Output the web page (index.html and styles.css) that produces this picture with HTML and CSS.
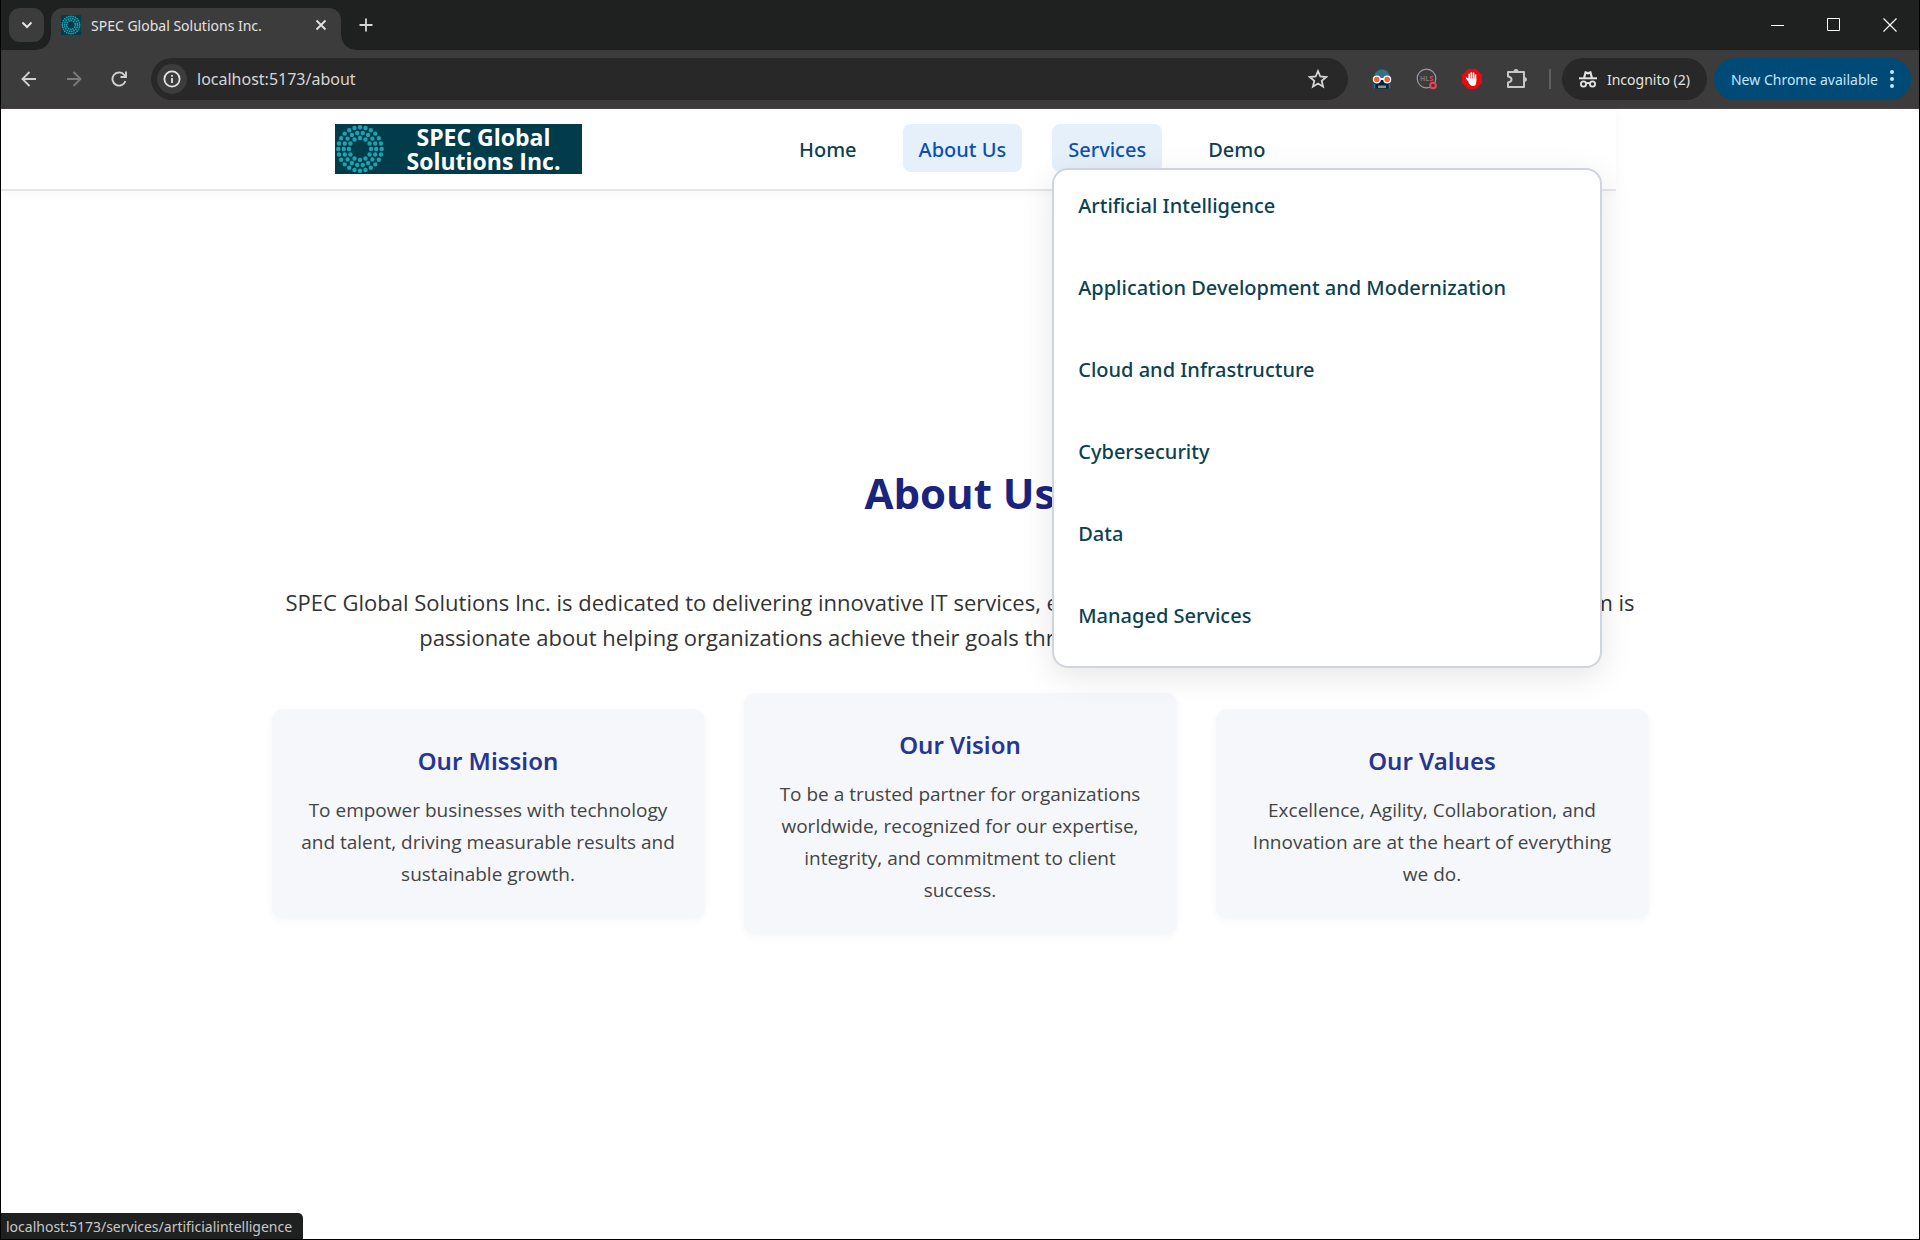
FILE: index.html
```html
<!DOCTYPE html>
<html lang="en">
<head>
<meta charset="utf-8">
<title>SPEC Global Solutions Inc.</title>
<link rel="stylesheet" href="styles.css">
</head>
<body>
<svg class="defs" aria-hidden="true">
  <symbol id="rings" viewBox="0 0 50 50">
    <rect width="50" height="50" fill="#023c4b"/>
    <g fill="none" stroke="#1ba3b1" stroke-width="4.400" stroke-linecap="round" stroke-dasharray="0 1">
      <circle cx="25" cy="25" r="21.7" pathLength="24"/>
      <circle cx="25" cy="25" r="16.2" pathLength="18"/>
      <circle cx="25" cy="25" r="11" pathLength="12"/>
    </g>
  </symbol>
</svg>
<div class="window">
  <div class="tabstrip">
    <button class="tab-search" aria-label="Search tabs"><svg width="12" height="8" viewBox="0 0 12 8"><path d="M1.5 1.5 6 6l4.500-4.500" fill="none" stroke="#e3e3e3" stroke-width="2"/></svg></button>
    <div class="tab">
      <svg class="favicon" width="20" height="20"><use href="#rings"/></svg>
      <span class="tab-title">SPEC Global Solutions Inc.</span>
      <button class="icon-btn tab-close" aria-label="Close tab"><svg width="12" height="12" viewBox="0 0 12 12"><path d="m1.500 1.500 9 9m0-9-9 9" stroke="#e3e3e3" stroke-width="1.800"/></svg></button>
    </div>
    <button class="icon-btn new-tab" aria-label="New tab"><svg width="14" height="14" viewBox="0 0 14 14"><path d="M7 .5v13M.5 7h13" stroke="#d6d6d6" stroke-width="1.800"/></svg></button>
    <div class="window-controls">
      <button class="icon-btn" aria-label="Minimize"><svg width="14" height="14" viewBox="0 0 14 14"><path d="M0 7.500h13" stroke="#fff"/></svg></button>
      <button class="icon-btn" aria-label="Maximize"><svg width="14" height="14" viewBox="0 0 14 14"><path d="M.5.5h12v12H.5z" fill="none" stroke="#fff"/></svg></button>
      <button class="icon-btn" aria-label="Close"><svg width="14" height="14" viewBox="0 0 14 14"><path d="m.5.5 13 13m0-13-13 13" stroke="#fff" stroke-width="1.200"/></svg></button>
    </div>
  </div>

  <div class="toolbar">
    <div class="history">
      <button class="icon-btn" aria-label="Back"><svg width="16" height="16" viewBox="0 0 16 16"><path d="M8.500 1 1.500 8l7 7M1.500 8H15" fill="none" stroke="#d0d0d0" stroke-width="1.800"/></svg></button>
      <button class="icon-btn" aria-label="Forward"><svg width="16" height="16" viewBox="0 0 16 16"><path d="m7.500 1 7 7-7 7M14.500 8H1" fill="none" stroke="#7c7c7c" stroke-width="1.800"/></svg></button>
      <button class="icon-btn" aria-label="Reload"><svg width="16" height="16" viewBox="0 0 16 16"><path d="M14.400 10A6.600 6.600 0 1 1 13 3.600L14.500 5.300M15 .5V6H9.500" fill="none" stroke="#d0d0d0" stroke-width="1.900"/></svg></button>
    </div>
    <div class="omnibox">
      <button class="site-info" aria-label="Site information"><svg width="18" height="18" viewBox="0 0 18 18"><circle cx="9" cy="9" r="7.600" fill="none" stroke="#e3e3e3" stroke-width="1.800"/><path d="M9 8v5M9 5v1.800" stroke="#e3e3e3" stroke-width="1.800"/></svg></button>
      <input class="url" type="text" aria-label="Address" value="localhost:5173/about">
      <button class="icon-btn" aria-label="Bookmark"><svg width="20" height="20" viewBox="0 0 20 20"><path d="m10 2 2.300 5.500 5.900.5-4.500 3.900 1.400 5.800L10 14.600l-5.100 3.100 1.400-5.800L1.800 8l5.900-.5z" fill="none" stroke="#d5d5d5" stroke-width="1.800"/></svg></button>
    </div>
    <div class="extensions">
      <button class="icon-btn" aria-label="Robot extension"><svg width="20" height="20" viewBox="0 0 20 20"><path d="M2.500 10C1.500 3 6 .5 10 .5s8.500 2.500 7.500 9.500z" fill="#2f7389"/><path d="M2.500 11h15v8.500h-15z" fill="#06202c"/><path d="M2.500 15v4.500M17.500 15v4.500" stroke="#2f7389" stroke-width="1.600"/><path d="M7 16.500v2.500M9 16.500v2.500M11 16.500v2.500M13 16.500v2.500" stroke="#c8eaf0" stroke-width="1.200"/><path d="M8 10h4" stroke="#fff" stroke-width="2"/><g fill="#f2603b" stroke="#fff" stroke-width="1.300"><circle cx="4.800" cy="10.500" r="3.400"/><circle cx="15.200" cy="10.500" r="3.400"/></g></svg></button>
      <button class="icon-btn" aria-label="HLS extension"><svg width="22" height="22" viewBox="0 0 22 22"><circle cx="10.500" cy="10.500" r="9.300" fill="none" stroke="#9c9c9c" stroke-width="1.200"/><text x="4" y="13" class="hls">HL<tspan class="hls-s">S</tspan></text><circle cx="17" cy="17.500" r="2.800" fill="#3c3c3c" stroke="#e8455c" stroke-width="2"/></svg></button>
      <button class="icon-btn" aria-label="Ad blocker"><svg width="22" height="22" viewBox="0 0 22 22"><path d="M7 1h8l6 6v8l-6 6H7l-6-6V7z" fill="#e40d0d"/><path d="m7.500 12.500-1.800-2.300M8.200 12V6.200M10.300 11V4.700M12.500 11V5M14.500 12V7" stroke="#fff" stroke-width="1.600" stroke-linecap="round"/><path d="M7.400 10.500h7.900v3q0 4.500-3.200 4.500t-4.700-4z" fill="#fff"/></svg></button>
      <button class="icon-btn" aria-label="Extensions"><svg width="22" height="22" viewBox="0 0 22 22"><path d="M2 4h16v15H2v-4.500q3.500-.7 3.500-3T2 8.500z" fill="none" stroke="#c7c7c7" stroke-width="2" stroke-linejoin="round"/><path d="M7.500 3.500a2.500 2.500 0 0 1 5 0zM18.500 9a2.500 2.500 0 0 1 0 5z" fill="#c7c7c7"/></svg></button>
    </div>
    <span class="separator"></span>
    <button class="chip"><svg width="18" height="18" viewBox="0 0 18 18"><path d="M0 8.300h18" stroke="#e3e3e3" stroke-width="2"/><path d="M4 8 5.800 1l3.200 1 3.200-1L14 8h-2.200l-1-4L9 4.600 7.200 4l-1 4z" fill="#e3e3e3"/><g fill="none" stroke="#e3e3e3" stroke-width="1.800"><circle cx="4.500" cy="14" r="2.600"/><circle cx="13.500" cy="14" r="2.600"/><path d="M7 13.500q2-1 4 0"/></g></svg><span>Incognito (2)</span></button>
    <button class="chip chip-update"><span>New Chrome available</span><svg width="4" height="18" viewBox="0 0 4 18"><g fill="#c2e7ff"><circle cx="2" cy="2" r="2"/><circle cx="2" cy="9" r="2"/><circle cx="2" cy="16" r="2"/></g></svg></button>
  </div>

  <div class="page">
    <header class="site-header">
      <a class="logo" href="#">
        <svg class="logo-mark" width="50" height="50"><use href="#rings"/></svg>
        <span class="logo-text">SPEC Global<br>Solutions Inc.</span>
      </a>
      <nav>
        <ul class="nav-list">
          <li><a class="nav-link" href="#">Home</a></li>
          <li><a class="nav-link active" href="#">About Us</a></li>
          <li class="has-menu">
            <a class="nav-link active" href="#">Services</a>
            <ul class="menu">
              <li><a href="#">Artificial Intelligence</a></li>
              <li><a href="#">Application Development and Modernization</a></li>
              <li><a href="#">Cloud and Infrastructure</a></li>
              <li><a href="#">Cybersecurity</a></li>
              <li><a href="#">Data</a></li>
              <li><a href="#">Managed Services</a></li>
            </ul>
          </li>
          <li><a class="nav-link" href="#">Demo</a></li>
        </ul>
      </nav>
    </header>
    <main class="about">
      <h1>About Us</h1>
      <p class="intro">SPEC Global Solutions Inc. is dedicated to delivering innovative IT services, empowering businesses through skilled staff. Our team is passionate about helping organizations achieve their goals through technology and commitment to value.</p>
      <div class="cards">
        <section class="card">
          <h2>Our Mission</h2>
          <p>To empower businesses with technology and talent, driving measurable results and sustainable growth.</p>
        </section>
        <section class="card">
          <h2>Our Vision</h2>
          <p>To be a trusted partner for organizations worldwide, recognized for our expertise, integrity, and commitment to client success.</p>
        </section>
        <section class="card">
          <h2>Our Values</h2>
          <p>Excellence, Agility, Collaboration, and Innovation are at the heart of everything we do.</p>
        </section>
      </div>
    </main>
  </div>
  <div class="status">localhost:5173/services/artificialintelligence</div>
</div>
</body>
</html>
```
FILE: styles.css
```css
*, *::before, *::after { box-sizing: border-box; }

body {
  margin: 0;
  background: #fff;
  font-family: "Open Sans", "Noto Sans", sans-serif;
}

button {
  border: 0;
  padding: 0;
  background: none;
  font: inherit;
  color: inherit;
}

ul { list-style: none; margin: 0; padding: 0; }
a { color: inherit; text-decoration: none; }
svg { display: block; flex: none; }

.defs { position: absolute; width: 0; height: 0; }

.window {
  position: relative;
  display: flex;
  flex-direction: column;
  min-height: 100vh;
  border: 1px solid #000;
  border-top: 0;
}

/* Browser chrome */
.tabstrip, .toolbar, .status { font-family: "Noto Sans", "Open Sans", sans-serif; font-size: 14px; }

.tabstrip {
  display: flex;
  align-items: center;
  height: 50px;
  padding-left: 8px;
  background: #1f2121;
  color: #e3e3e3;
}

.tab-search {
  display: grid;
  place-items: center;
  width: 35px;
  height: 34px;
  border-radius: 11px;
  background: #3c3c3c;
}

.icon-btn { display: grid; place-items: center; width: 24px; height: 24px; }

.tab {
  position: relative;
  display: flex;
  align-items: center;
  align-self: flex-end;
  gap: 10px;
  width: 290px;
  height: 42px;
  margin-left: 7px;
  padding: 0 8px 8px 10px;
  border-radius: 12px 12px 0 0;
  background: #3c3c3c;
}

.tab::before, .tab::after {
  content: "";
  position: absolute;
  bottom: 0;
  width: 14px;
  height: 14px;
}
.tab::before { right: 100%; background: radial-gradient(circle at 0 0, transparent 13px, #3c3c3c 14px); }
.tab::after { left: 100%; background: radial-gradient(circle at 100% 0, transparent 13px, #3c3c3c 14px); }

.favicon { width: 20px; height: 20px; }
.tab-title { flex: 1; white-space: nowrap; }
.new-tab { margin-left: 13px; }
.window-controls { display: flex; gap: 32px; margin-left: auto; padding-right: 17px; }

.toolbar {
  display: flex;
  align-items: center;
  height: 59px;
  padding: 0 8px 0 16px;
  border-bottom: 1px solid #4a4446;
  background: #3c3c3c;
  color: #e3e3e3;
}

.history { display: flex; gap: 21px; margin-right: 20px; }

.omnibox {
  display: flex;
  align-items: center;
  flex: 1;
  height: 42px;
  padding: 0 18px 0 6px;
  border-radius: 21px;
  background: #282828;
}

.site-info {
  display: grid;
  place-items: center;
  width: 30px;
  height: 30px;
  border-radius: 50%;
  background: #3c3c3c;
}

.url {
  flex: 1;
  min-width: 0;
  margin-left: 10px;
  padding: 0;
  border: 0;
  outline: 0;
  background: none;
  color: #d6d6d6;
  font-family: inherit;
  font-size: 16px;
}

.extensions { display: flex; gap: 21px; margin-left: 22px; }
.hls { font-size: 7px; font-weight: 700; fill: #777; }
.hls-s { fill: #e8455c; }

.separator { width: 2px; height: 20px; margin: 0 11px 0 20px; background: #5f5f5f; }

.chip {
  display: flex;
  align-items: center;
  justify-content: center;
  gap: 10px;
  width: 145px;
  height: 42px;
  border-radius: 21px;
  background: #282828;
  white-space: nowrap;
}

.chip-update {
  gap: 12px;
  width: 197px;
  margin-left: 7px;
  background: #004a77;
  color: #c2e7ff;
}

.status {
  position: absolute;
  left: 0;
  bottom: 0;
  padding: 2px 11px 0 5px;
  border-radius: 0 5px 0 0;
  background: #1f2121;
  color: #c8c8c8;
  line-height: 24px;
}

/* Site */
.page { flex: 1; background: #fff; }

.site-header {
  position: relative;
  z-index: 1;
  display: flex;
  align-items: flex-start;
  gap: 201px;
  max-width: 1615px;
  height: 82px;
  padding: 15px 0 0 334px;
  border-bottom: 2px solid #e5e5ea;
  background: #fff;
  box-shadow: 0 2px 12px rgba(0, 0, 0, 0.04);
}

.logo {
  display: flex;
  align-items: center;
  width: 247px;
  height: 50px;
  background: #023c4b;
  color: #fff;
}

.logo-text {
  flex: 1;
  font-size: 23px;
  font-weight: 700;
  line-height: 24px;
  text-align: center;
}

.nav-list { display: flex; gap: 30px; }

.nav-link, .menu a {
  display: block;
  color: #0b4252;
  font-family: "Noto Sans", "Open Sans", sans-serif;
  font-size: 20px;
  font-weight: 500;
}

.nav-link {
  padding: 12px 16px 8px;
  border-radius: 8px;
  line-height: 28px;
}

.nav-link.active { background: #e6f0fa; color: #0a50b8; }

.has-menu { position: relative; }

.menu {
  position: absolute;
  top: 44px;
  left: 0;
  width: 550px;
  padding: 19px 24px 34px;
  border: 2px solid #d0d4dc;
  border-radius: 16px;
  background: #fff;
  box-shadow: 0 8px 32px rgba(0, 0, 0, 0.1);
}

.menu li + li { margin-top: 49px; }
.menu a { line-height: 33px; }

.about {
  max-width: 1425px;
  margin: 0 auto;
  padding: 271px 24px 40px;
  text-align: center;
}

h1 {
  margin: 0 0 61px;
  color: #1a237e;
  font-size: 42px;
  font-weight: 700;
  line-height: 62px;
}

.intro {
  margin: 0 0 38px;
  color: #333;
  font-size: 22px;
  line-height: 35px;
}

.cards {
  display: grid;
  grid-template-columns: repeat(3, 1fr);
  align-items: center;
  gap: 39px;
}

.card {
  padding: 32px 28px 29px;
  border-radius: 12px;
  background: #f5f7fb;
  box-shadow: 0 2px 8px rgba(0, 0, 0, 0.04);
}

.card h2 {
  margin: 0 0 14px;
  color: #283593;
  font-family: "Noto Sans", "Open Sans", sans-serif;
  font-size: 24px;
  font-weight: 600;
  line-height: 39px;
}

.card p {
  margin: 0;
  color: #444;
  font-size: 19px;
  line-height: 32px;
}
```
